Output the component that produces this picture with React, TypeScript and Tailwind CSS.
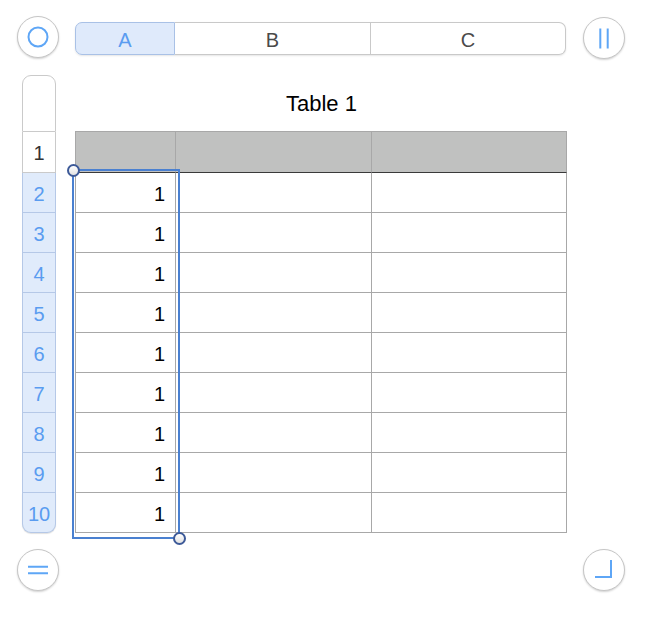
import React from 'react'

const rows = [2, 3, 4, 5, 6, 7, 8, 9, 10]

function RoundButton({ children }: { children: React.ReactNode }) {
  return (
    <div className="w-[42px] h-[42px] shrink-0 rounded-full border border-[#c6c6c6] bg-white shadow-[0_1px_2px_rgba(0,0,0,0.18)] flex items-center justify-center">
      {children}
    </div>
  )
}

export default function App() {
  return (
    <div className="w-[652px] h-[642px] bg-white font-['Liberation_Sans',Arial,sans-serif] overflow-hidden">
      {/* Top: column headers */}
      <div className="flex items-start pt-[16px] pl-[17px]">
        <RoundButton>
          <svg width="40" height="40" viewBox="0 0 40 40">
            <circle cx="20" cy="20" r="9.5" fill="none" stroke="#5ea6f6" strokeWidth="2" />
          </svg>
        </RoundButton>
        <div className="ml-[16px] mt-[6px] flex h-[33px] w-[491px] shadow-[0_1px_2px_rgba(0,0,0,0.1)] rounded-[7px] text-[20px] leading-none">
          <div className="w-[100px] pt-[2px] rounded-l-[7px] border border-[#a9c1e6] bg-[#dfeafb] text-[#5a9cf0] flex items-center justify-center">A</div>
          <div className="w-[196px] pt-[2px] border-y border-r border-[#c9c9c9] bg-white text-[#4a4a4a] flex items-center justify-center">B</div>
          <div className="w-[195px] pt-[2px] rounded-r-[7px] border-y border-r border-[#c9c9c9] bg-white text-[#4a4a4a] flex items-center justify-center">C</div>
        </div>
        <div className="ml-[17px] mt-[1px]">
          <RoundButton>
            <svg width="40" height="40" viewBox="0 0 40 40">
              <path d="M16.3 10.5V30.5M23.7 10.5V30.5" stroke="#5ea6f6" strokeWidth="2" />
            </svg>
          </RoundButton>
        </div>
      </div>

      {/* Middle: row headers + table */}
      <div className="flex mt-[16px]">
        <div className="ml-[22px] w-[34px] flex flex-col text-[20px] leading-none">
          <div className="h-[57px] rounded-t-[9px] border border-[#cacaca] bg-white" />
          <div className="h-[41px] pt-[2px] border-x border-b border-[#cacaca] bg-white text-[#333] flex items-center justify-center">1</div>
          {rows.map((n, i) => (
            <div
              key={n}
              className={`h-[40px] pt-[2px] border-x border-b border-[#b5c8e7] bg-[#e0ebfb] text-[#5a9cf0] flex items-center justify-center ${i === rows.length - 1 ? 'rounded-b-[9px] shadow-[0_1px_1px_rgba(0,0,0,0.12)]' : ''}`}
            >
              {n}
            </div>
          ))}
        </div>

        <div className="ml-[19px] w-[492px]">
          <div className="h-[56px] flex items-center justify-center text-[22px] text-black pl-[1px]">Table 1</div>
          <div className="relative border-t border-l border-[#a8a8a8]">
            <div className="flex">
              <div className="w-[100px] h-[41px] bg-[#c0c1c0] border-r border-b border-r-[#a8a8a8] border-b-[#3a3a3a]" />
              <div className="w-[196px] h-[41px] bg-[#c0c1c0] border-r border-b border-r-[#a8a8a8] border-b-[#3a3a3a]" />
              <div className="w-[195px] h-[41px] bg-[#c0c1c0] border-r border-b border-r-[#a8a8a8] border-b-[#3a3a3a]" />
            </div>
            {rows.map((n) => (
              <div key={n} className="flex">
                <div className="w-[100px] h-[40px] pt-[2px] border-r border-b border-[#a8a8a8] flex items-center justify-end pr-[10px] text-[20px] leading-none text-black">1</div>
                <div className="w-[196px] h-[40px] border-r border-b border-[#a8a8a8]" />
                <div className="w-[195px] h-[40px] border-r border-b border-[#a8a8a8]" />
              </div>
            ))}

            {/* Selection */}
            <div className="absolute left-[-4px] top-[37px] w-[108px] h-[370px] border-2 border-[#4a80d0] pointer-events-none" />
            <div className="absolute left-[-9px] top-[32px] w-[13px] h-[13px] rounded-full border-2 border-[#3d5a98] bg-gradient-to-b from-white to-[#e2e2e2]" />
            <div className="absolute left-[97px] top-[400px] w-[13px] h-[13px] rounded-full border-2 border-[#3d5a98] bg-gradient-to-b from-white to-[#e2e2e2]" />
          </div>
        </div>
      </div>

      {/* Bottom controls */}
      <div className="flex justify-between mt-[16px] pl-[17px] pr-[27px]">
        <RoundButton>
          <svg width="40" height="40" viewBox="0 0 40 40">
            <path d="M10 16.7H30M10 23.3H30" stroke="#5ea6f6" strokeWidth="2" />
          </svg>
        </RoundButton>
        <RoundButton>
          <svg width="40" height="40" viewBox="0 0 40 40">
            <path d="M27 10V27H11" fill="none" stroke="#5ea6f6" strokeWidth="2" />
          </svg>
        </RoundButton>
      </div>
    </div>
  )
}
